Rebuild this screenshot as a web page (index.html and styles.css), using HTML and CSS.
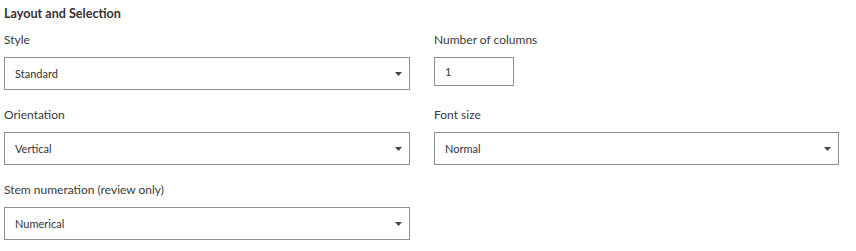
FILE: index.html
```html
<!DOCTYPE html>
<html lang="en">
<head>
<meta charset="UTF-8">
<title>Layout and Selection</title>
<link rel="stylesheet" href="styles.css">
</head>
<body>

<!-- Layout settings panel -->
<div class="panel">
    <h3 class="panel-title">Layout and Selection</h3>

    <div class="form-grid">
        <div class="field">
            <label>Style</label>
            <div class="select">
                <span>Standard</span>
                <svg class="caret" width="7" height="4" viewBox="0 0 7 4"><path d="M0 0h7L3.5 4z"/></svg>
            </div>
        </div>

        <div class="field">
            <label>Number of columns</label>
            <input class="num-input" type="text" value="1">
        </div>

        <div class="field">
            <label>Orientation</label>
            <div class="select">
                <span>Vertical</span>
                <svg class="caret" width="7" height="4" viewBox="0 0 7 4"><path d="M0 0h7L3.5 4z"/></svg>
            </div>
        </div>

        <div class="field">
            <label>Font size</label>
            <div class="select">
                <span>Normal</span>
                <svg class="caret" width="7" height="4" viewBox="0 0 7 4"><path d="M0 0h7L3.5 4z"/></svg>
            </div>
        </div>

        <div class="field">
            <label>Stem numeration (review only)</label>
            <div class="select">
                <span>Numerical</span>
                <svg class="caret" width="7" height="4" viewBox="0 0 7 4"><path d="M0 0h7L3.5 4z"/></svg>
            </div>
        </div>
    </div>
</div>

</body>
</html>
```

FILE: styles.css
```css
/* General Styles */
* {
    margin: 0;
    padding: 0;
    box-sizing: border-box;
}

body {
    background: #fff;
    font-family: 'Lato', 'Liberation Sans', sans-serif;
    color: #333;
}

/* Panel */
.panel {
    padding: 6px 0 0 4px;
}

.panel-title {
    font-size: 12.6px;
    font-weight: bold;
    line-height: 16px;
    color: #333;
    margin-bottom: 10px;
}

/* Two column grid */
.form-grid {
    display: grid;
    grid-template-columns: 406px 405px;
    column-gap: 24px;
    row-gap: 17px;
}

.field label {
    display: block;
    font-size: 12px;
    line-height: 16px;
    color: #3a3a3a;
    margin-bottom: 9px;
}

/* Fake select box */
.select {
    height: 33px;
    border: 1px solid #8f8f8f;
    background: #fff;
    display: flex;
    align-items: center;
    justify-content: space-between;
    padding: 0 7px 0 10px;
    font-size: 11px;
    color: #333;
}

.caret {
    fill: #444;
}

/* Number input */
.num-input {
    width: 80px;
    height: 29px;
    border: 1px solid #8f8f8f;
    padding: 0 10px;
    font-family: 'Lato', 'Liberation Sans', sans-serif;
    font-size: 11px;
    color: #333;
    outline: none;
}
```
